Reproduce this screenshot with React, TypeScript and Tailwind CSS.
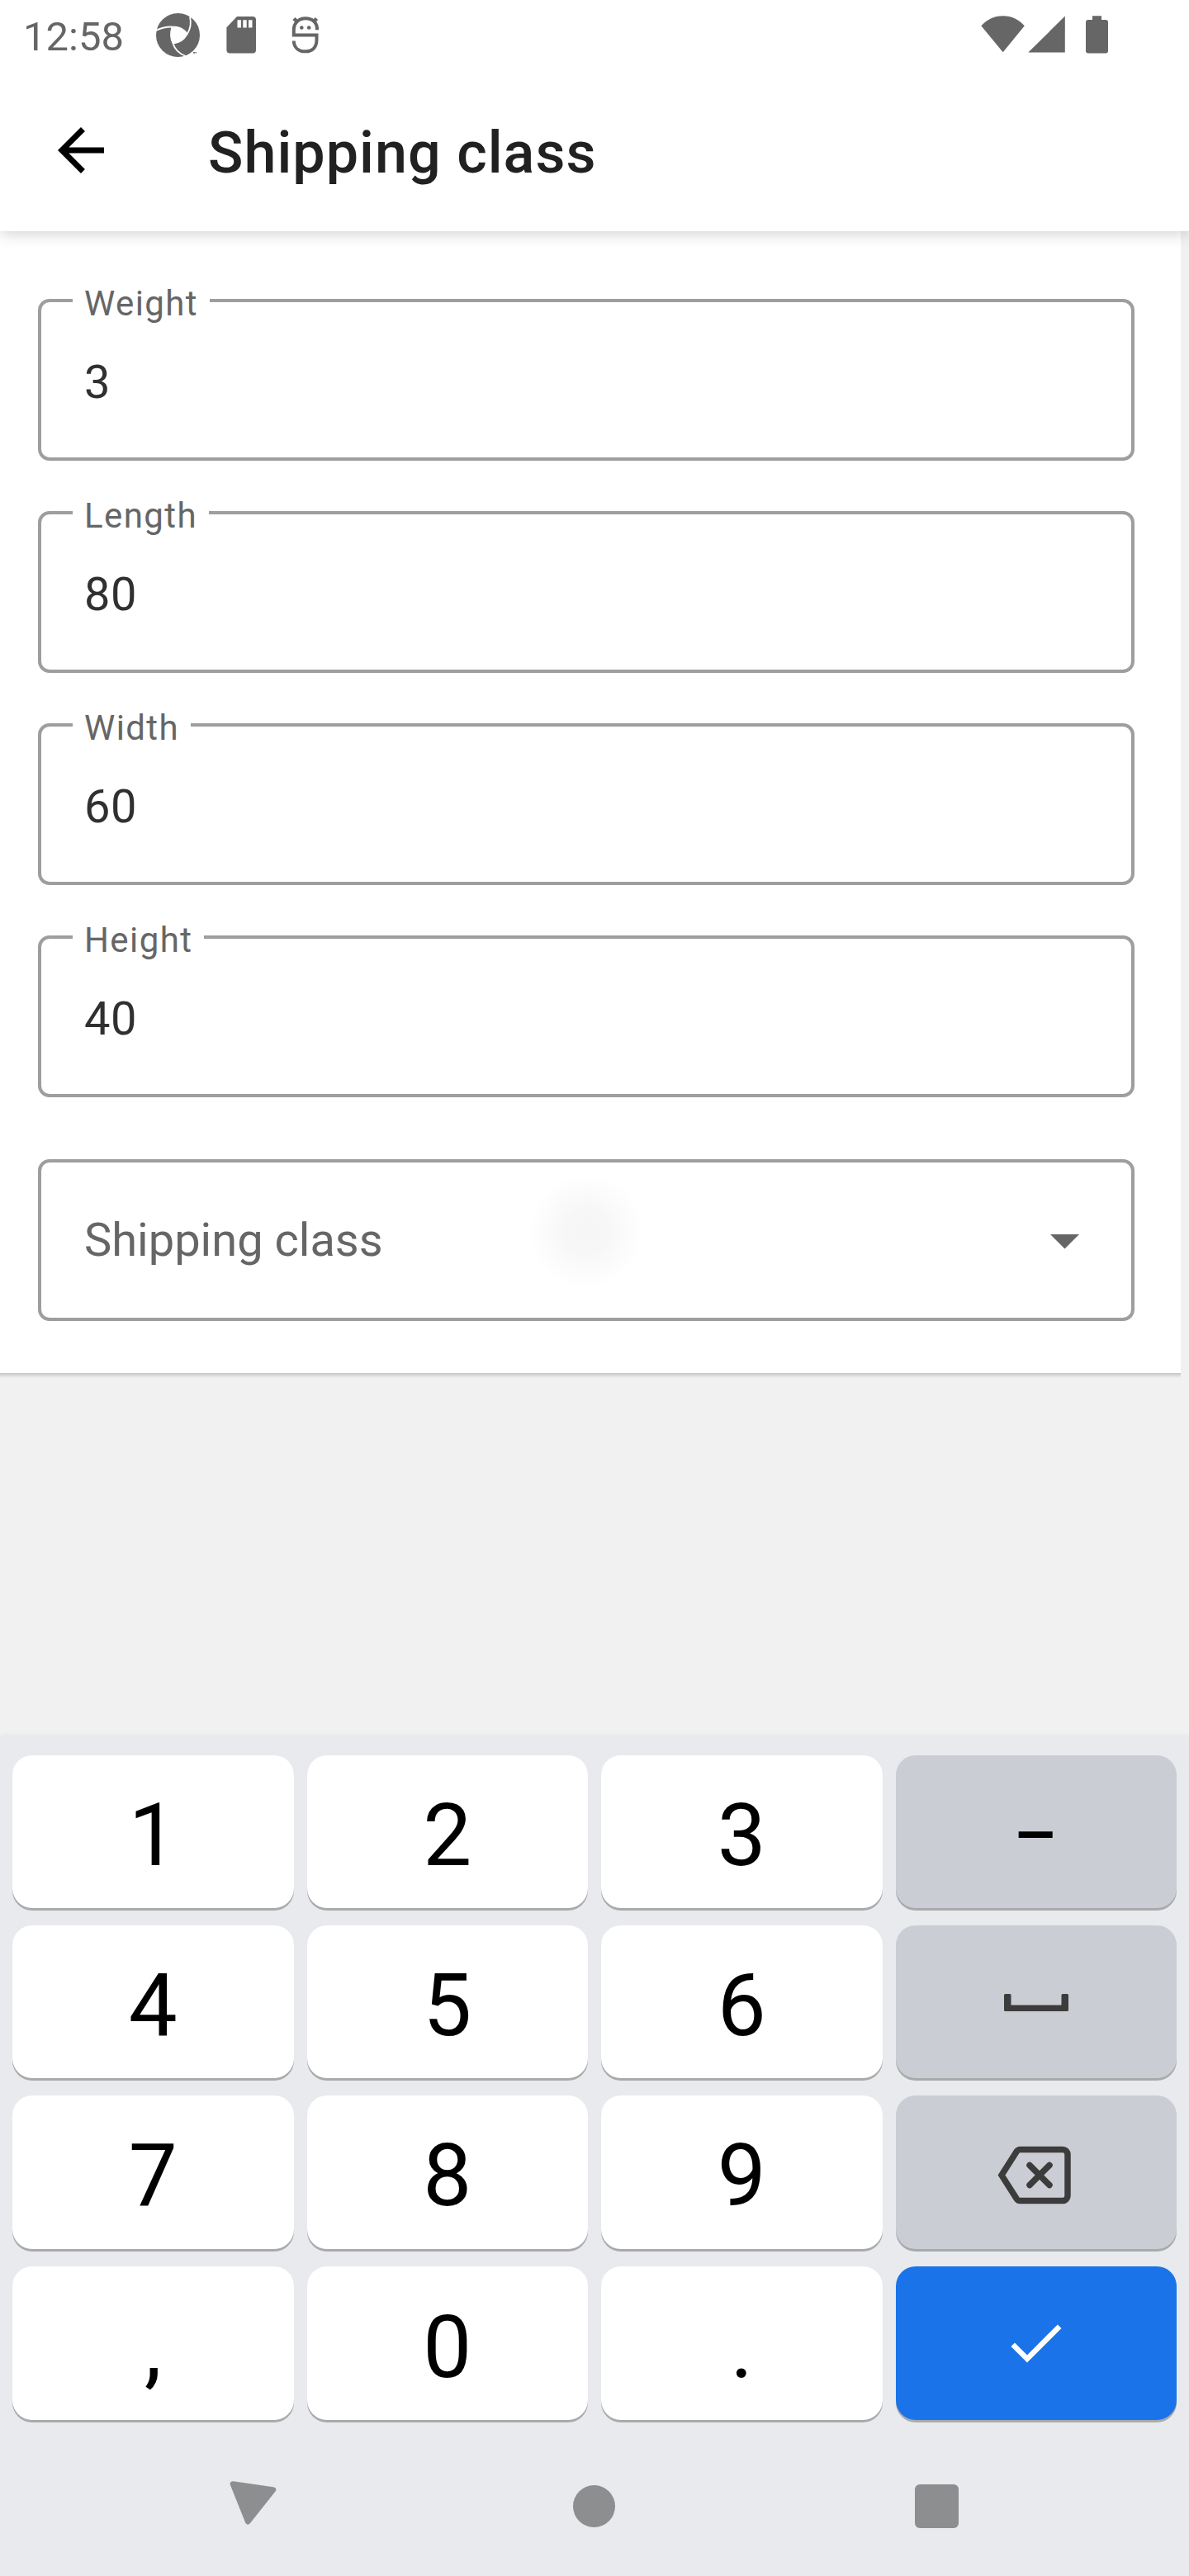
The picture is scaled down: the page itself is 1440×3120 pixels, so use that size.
import React from "react";

function StatusBar() {
  return (
    <div className="flex h-[84px] items-start text-[#666666]">
      <span className="ml-[28px] mt-[16px] w-[160px] text-[49px] leading-[57px]">12:58</span>
      <svg className="mt-[16px] h-[54px] w-[54px]" viewBox="0 0 54 54" fill="currentColor">
        <circle cx="27.5" cy="26.5" r="26.5" />
        <path d="M20 17.5C28 15.5 34 18.5 39 25.5C35 32 29.500 36 22 36.500C18.500 30 18.500 23 20 17.500Z" fill="#ffffff" />
        <g fill="none" stroke="#ffffff" strokeWidth="1.800">
          <path d="M0 21.500C6 18 13 16.300 21 16.500C30 16.500 35 19.500 39 25.500" />
          <path d="M42 4.500C44 13 42.500 19.500 38.500 25.500C35 31.500 29 36 21.500 36.500" />
          <path d="M37 52C29 49 23.500 43.500 21.500 36.500C18 30 18.500 23 20.500 16.500" />
        </g>
        <path d="M40 50L47 45.500L55 46L54 54H38Z" fill="#ffffff" />
        <path d="M46 47h2v1.500h-2zM48.500 47h1.500v1.500h-1.500z" />
      </svg>
      <svg className="ml-[32px] mt-[20px] h-[45px] w-[36px]" viewBox="0 0 36 45" fill="currentColor">
        <path
          fillRule="evenodd"
          d="M13 0H32A4 4 0 0 1 36 4V40.500A4 4 0 0 1 32 44.500H4.400A4 4 0 0 1 .4 40.500V13.300ZM13.500 4.300V13.500H18V4.300ZM20.300 4.300V13.500H24.700V4.300ZM27 4.300V13.500H31.500V4.300Z"
        />
      </svg>
      <svg
        className="ml-[43px] mt-[20px] h-[46px] w-[34px]"
        viewBox="0 0 34 46"
        fill="none"
        stroke="currentColor"
        strokeWidth="4"
      >
        <path d="M29 14.200H31C30.500 7 25 2.300 17 2.300S2.800 8 2.800 16V22.500H30.500V28C30.500 37 25.500 42.300 17 42.300S3 37.500 2.800 29.500" />
        <path d="M3 2.500L6.500 6M30.500 2.500L27 6" strokeWidth="4.500" />
        <circle cx="12.300" cy="13.500" r="2.300" fill="currentColor" stroke="none" />
        <circle cx="21.200" cy="13.500" r="2.300" fill="currentColor" stroke="none" />
      </svg>
      <svg className="ml-auto mt-[19px] h-[45px] w-[54px]" viewBox="0 0 54 45" fill="currentColor">
        <path d="M.3 12.300C7 5 16 .3 26.700 .3S46 5 52.800 12.300L26.700 44.300Z" />
      </svg>
      <svg className="ml-[3px] mt-[19px] h-[45px] w-[45px]" viewBox="0 0 45 45" fill="currentColor">
        <path d="M44.800 .5V44.600H.3Z" />
      </svg>
      <svg className="ml-[25px] mr-[98px] mt-[19px] h-[46px] w-[27px]" viewBox="0 0 27 46" fill="currentColor">
        <path d="M8 .2H19V5H24A3 3 0 0 1 27 8V42.600A3 3 0 0 1 24 45.600H3A3 3 0 0 1 0 42.600V8A3 3 0 0 1 3 5H8Z" />
      </svg>
    </div>
  );
}

function Toolbar() {
  return (
    <div className="flex h-[196px] items-start text-[#212121]">
      <svg className="ml-[70px] mt-[70px] h-[56px] w-[56px]" viewBox="4 4 16 16" fill="#000000">
        <path d="M20 11H7.830l5.590-5.590L12 4l-8 8 8 8 1.410-1.410L7.830 13H20v-2z" />
      </svg>
      <h1 className="ml-[126px] mt-[60px] text-[70px] font-medium leading-[82px] tracking-[1.05px]">Shipping class</h1>
    </div>
  );
}

function Field({ label, value }: { label: string; value: string }) {
  return (
    <div className="relative flex h-[196px] items-center rounded-[14px] border-4 border-[#9e9e9e] pl-[52px]">
      <span className="absolute left-[38px] top-[-23px] bg-white px-[14px] text-[42px] leading-[50px] tracking-[1.4px] text-[#666666]">
        {label}
      </span>
      <span className="pt-[6px] text-[56px] leading-[66px] tracking-[0.5px] text-[#303030]">{value}</span>
    </div>
  );
}

function ShippingForm() {
  return (
    <div className="w-[1430px]">
      <div className="h-[1383px] bg-white pl-[46px] pr-[56px] pt-[82px]">
        <div className="flex flex-col gap-[61px]">
          <Field label="Weight" value="3" />
          <Field label="Length" value="80" />
          <Field label="Width" value="60" />
          <Field label="Height" value="40" />
        </div>
        <div className="relative mt-[75px] flex h-[196px] items-center justify-between rounded-[14px] border-4 border-[#9e9e9e] pl-[52px] pr-[63px]">
          <div className="absolute left-[590px] top-[13px] h-[140px] w-[140px] rounded-full bg-[radial-gradient(circle_closest-side,#f6f6f6_0%,#f7f7f7_38%,#fbfbfb_68%,#ffffff_100%)]" />
          <span className="relative text-[56px] leading-[66px] text-[#666666]">Shipping class</span>
          <svg className="mt-[4px] h-[18px] w-[35px]" viewBox="0 0 35 18" fill="#666666">
            <path d="M0 0H35L17.500 17.500Z" />
          </svg>
        </div>
      </div>
      <div className="h-[6px] bg-linear-to-b from-[#c6c6c6] to-[#f1f1f1]" />
    </div>
  );
}

const keyBase =
  "flex items-start justify-center rounded-[24px] shadow-[0_3px_0_#a9aaac] text-[105px] leading-[123px] text-black ";

function DigitKey({ children, low = false }: { children: React.ReactNode; low?: boolean }) {
  return <div className={keyBase + (low ? "bg-white pt-[37px]" : "bg-white pt-[36px]")}>{children}</div>;
}

function ActionKey({ children, primary = false }: { children: React.ReactNode; primary?: boolean }) {
  return <div className={keyBase + (primary ? "bg-[#1a73e8]" : "bg-[#cbcdd5]")}>{children}</div>;
}

function Keyboard() {
  return (
    <div className="h-[1017px] bg-[#e8eaed] pt-[23px] shadow-[0_-1px_6px_rgba(0,0,0,0.06)]">
      <div className="mx-[15px] grid grid-cols-4 grid-rows-[185px_185px_186px_186px] gap-x-[16px] gap-y-[21px]">
        <DigitKey>1</DigitKey>
        <DigitKey>2</DigitKey>
        <DigitKey>3</DigitKey>
        <ActionKey>
          <span className="scale-x-80 pt-[37px]">–</span>
        </ActionKey>
        <DigitKey>4</DigitKey>
        <DigitKey>5</DigitKey>
        <DigitKey>6</DigitKey>
        <ActionKey>
          <svg className="mt-[83px] h-[21px] w-[78px]" viewBox="0 0 78 21" fill="#3c3c3c">
            <path d="M1.500 0H7A1.500 1.500 0 0 1 8.500 1.500V13.500H69.500V1.500A1.500 1.500 0 0 1 71 0H76.500A1.500 1.500 0 0 1 78 1.500V19.500A1.500 1.500 0 0 1 76.500 21H1.500A1.500 1.500 0 0 1 0 19.500V1.500A1.500 1.500 0 0 1 1.500 0Z" />
          </svg>
        </ActionKey>
        <DigitKey>7</DigitKey>
        <DigitKey>8</DigitKey>
        <DigitKey>9</DigitKey>
        <ActionKey>
          <svg
            className="mr-[3px] mt-[61px] h-[71px] w-[90px]"
            viewBox="0 0 90 71"
            fill="none"
            stroke="#3c3c3c"
            strokeWidth="7.500"
          >
            <path d="M27.500 4.500H79A6 6 0 0 1 85 10.500V60.500A6 6 0 0 1 79 66.500H27.500Q25 66.500 23.500 64.500L5 35.500L23.500 6.500Q25 4.500 27.500 4.500Z" />
            <path d="M39 23.500L63 47.500M63 23.500L39 47.500" strokeLinecap="round" />
          </svg>
        </ActionKey>
        <DigitKey low>,</DigitKey>
        <DigitKey low>0</DigitKey>
        <DigitKey low>.</DigitKey>
        <ActionKey primary>
          <svg className="mt-[70px] h-[48px] w-[62px]" viewBox="0 0 62 48" fill="none" stroke="#ffffff" strokeWidth="6.500">
            <path d="M2.700 24.700L20 42L59.200 2.700" />
          </svg>
        </ActionKey>
      </div>
      <div className="mt-[73px] flex items-start text-[#8d8e90]">
        <svg className="ml-[278px] h-[56px] w-[58px]" viewBox="0 0 58 56" fill="currentColor">
          <path d="M4.500 1.300L53 8.300Q58 9.500 55.500 13.500L25 52Q22 55.500 19.300 51.700L.8 5.500Q0 1.300 4.500 1.300Z" />
        </svg>
        <div className="ml-[358px] mt-[6px] h-[51px] w-[51px] rounded-full bg-[#8d8e90]" />
        <div className="ml-[363px] mt-[5px] h-[53px] w-[53px] rounded-[6px] bg-[#8d8e90]" />
      </div>
    </div>
  );
}

export default function App() {
  return (
    <div className="flex h-[3120px] w-[1440px] flex-col overflow-hidden bg-[#f1f1f1] font-['Roboto',sans-serif]">
      <header className="relative z-10 h-[280px] bg-white shadow-[0_2px_18px_rgba(0,0,0,0.2)]">
        <StatusBar />
        <Toolbar />
      </header>
      <main className="h-[1823px]">
        <ShippingForm />
      </main>
      <Keyboard />
    </div>
  );
}
